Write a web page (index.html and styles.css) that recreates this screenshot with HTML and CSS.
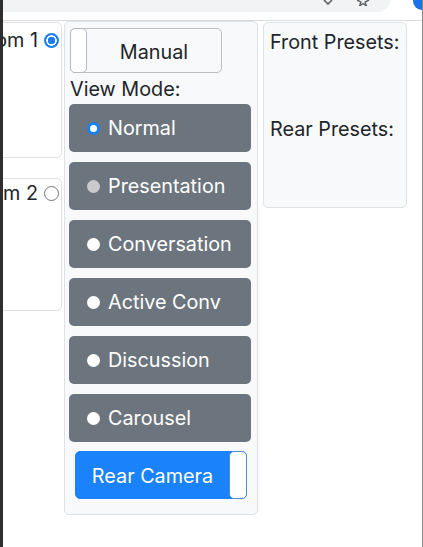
FILE: index.html
```html
<!DOCTYPE html>
<html>
<head>
<meta charset="utf-8">
<link rel="stylesheet" href="styles.css">
</head>
<body>
<div class="chrome">
  <div class="urlbar">
    <svg class="ico" width="12" height="6" viewBox="0 0 12 6"><path d="M2 0 L6 4 L10 0" fill="none" stroke="#5f6368" stroke-width="1.6"/></svg>
    <svg class="ico star" width="14" height="6" viewBox="0 0 14 6"><path d="M1 0 L5 2 L3.5 6 L7 3.5 L10.5 6 L9 2 L13 0" fill="none" stroke="#5f6368" stroke-width="1.4"/></svg>
  </div>
  <div class="avatar"></div>
</div>
<div class="page">
  <div class="rooms">
    <div class="room"><span class="room-name">Room 1</span><span class="nradio checked"></span></div>
    <div class="room room2"><span class="room-name">Room 2</span><span class="nradio"></span></div>
  </div>
  <div class="controls">
    <div class="toggle manual"><span class="knob"></span><span class="toggle-label">Manual</span></div>
    <div class="label">View Mode:</div>
    <div class="modes">
      <div class="mode"><span class="dot dot-on"></span>Normal</div>
      <div class="mode"><span class="dot dot-dim"></span>Presentation</div>
      <div class="mode"><span class="dot"></span>Conversation</div>
      <div class="mode"><span class="dot"></span>Active Conv</div>
      <div class="mode"><span class="dot"></span>Discussion</div>
      <div class="mode"><span class="dot"></span>Carousel</div>
    </div>
    <div class="toggle rear"><span class="toggle-label">Rear Camera</span><span class="knob"></span></div>
  </div>
  <div class="presets">
    <p class="preset-title">Front Presets:</p>
    <p class="preset-title rear-title">Rear Presets:</p>
  </div>
</div>
</body>
</html>
```
FILE: styles.css
```css
html, body {
  margin: 0;
  padding: 0;
}
body {
  width: 423px;
  height: 547px;
  box-sizing: border-box;
  border-left: 3px solid #2e2e2e;
  border-right: 1px solid #8a8a8a;
  background: #fff;
  font-family: Inter, "Liberation Sans", sans-serif;
  font-size: 19.8px;
  color: #212529;
  overflow: hidden;
}
.chrome {
  height: 20px;
  border-bottom: 1px solid #dadce0;
  display: flex;
  align-items: flex-start;
  box-sizing: content-box;
}
.urlbar {
  width: 387px;
  height: 12px;
  background: #f1f3f4;
  border-radius: 0 0 14px 0;
  display: flex;
  justify-content: flex-end;
  align-items: flex-start;
  padding-right: 20px;
  box-sizing: border-box;
  gap: 22px;
}
.ico { display: block; }
.avatar {
  margin-left: auto;
  margin-top: -8px;
  margin-right: -9px;
  width: 18px;
  height: 18px;
  border-radius: 50%;
  background: #1a73e8;
}
.page {
  display: flex;
  align-items: flex-start;
  margin-left: -61px;
}
.rooms {
  width: 120px;
  margin-top: 1px;
  display: flex;
  flex-direction: column;
  gap: 20px;
}
.room {
  height: 136px;
  box-sizing: border-box;
  border: 1px solid #dee2e6;
  border-radius: 5px;
  background: #fff;
  display: flex;
  justify-content: flex-end;
  align-items: flex-start;
  padding: 4px 2px 0 0;
  gap: 6px;
}
.room2 {
  height: 133px;
  padding-top: 1px;
}
.room-name {
  line-height: 27px;
  white-space: nowrap;
}
.nradio {
  width: 15px;
  height: 15px;
  margin-top: 6px;
  box-sizing: border-box;
  border-radius: 50%;
  border: 1px solid #767676;
  background: #fff;
}
.nradio.checked {
  border: none;
  background: radial-gradient(circle, #1a7ff5 0 3.5px, #fff 4px 5px, #1a7ff5 5.5px);
}
.controls {
  width: 194px;
  margin-left: 2px;
  box-sizing: border-box;
  border: 1px solid #dee2e6;
  border-radius: 5px;
  background: #f8f9fa;
  padding: 6px 6px 15px 4px;
  display: flex;
  flex-direction: column;
}
.toggle {
  display: flex;
  height: 45px;
  box-sizing: border-box;
  border-radius: 5px;
}
.manual {
  width: 152px;
  margin-left: 1px;
  border: 1px solid #b9bec3;
  background: #f8f9fa;
  padding-top: 2px;
}
.knob {
  width: 17px;
  box-sizing: border-box;
  background: #fff;
  border-radius: 5px;
}
.manual .knob {
  margin: -3px 0 -1px -1px;
  border: 1px solid #b3b8bd;
}
.toggle-label {
  flex: 1;
  text-align: center;
  align-self: center;
}
.label {
  height: 31px;
  padding-top: 1px;
  box-sizing: border-box;
  line-height: 31px;
  margin-left: 1px;
}
.modes {
  display: flex;
  flex-direction: column;
  gap: 10px;
}
.mode {
  height: 48px;
  border-radius: 5px;
  background: #6c757d;
  color: #fff;
  display: flex;
  align-items: center;
  padding-left: 18px;
  gap: 8px;
}
.dot {
  width: 13px;
  height: 13px;
  border-radius: 50%;
  background: #fff;
  box-sizing: border-box;
}
.dot-dim {
  background: #c8cacc;
}
.dot-on {
  background: #fff;
  border: 3px solid #1a7ff5;
}
.rear {
  height: 48px;
  margin: 9px 4px 0 6px;
  background: #1a82fb;
  color: #fff;
  border: 1px solid #1a82fb;
  padding-top: 1px;
}
.rear .knob {
  width: 18px;
  margin: -2px -1px -1px 0;
  border: 1px solid #4d8fd6;
}
.presets {
  width: 144px;
  height: 186px;
  margin-left: 5px;
  margin-top: 1px;
  box-sizing: border-box;
  border: 1px solid #dee2e6;
  border-radius: 5px;
  background: #f8f9fa;
  padding: 6px 6px;
}
.preset-title {
  margin: 0;
  line-height: 27px;
  white-space: nowrap;
}
.rear-title {
  margin-top: 60px;
}
```
